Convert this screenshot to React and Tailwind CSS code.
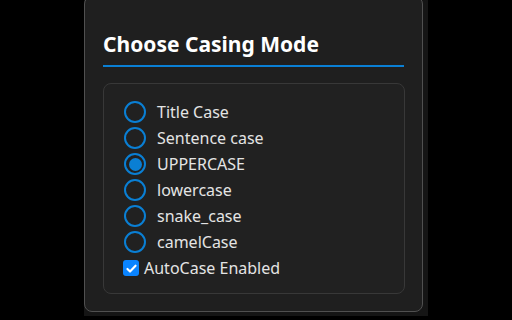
import React, { useState } from "react";

const modes = ["Title Case", "Sentence case", "UPPERCASE", "lowercase", "snake_case", "camelCase"];

const Radio = ({ checked }) => (
  <div className="w-[22px] h-[22px] rounded-full border-[2.5px] border-[#0a7fd4] flex items-center justify-center shrink-0">
    {checked && <div className="w-[13px] h-[13px] rounded-full bg-[#0a7fd4]" />}
  </div>
);

export default function App() {
  const [mode, setMode] = useState("UPPERCASE");
  const [auto, setAuto] = useState(true);

  return (
    <div className="w-[512px] h-[320px] bg-black overflow-hidden" style={{ fontFamily: '"Noto Sans", "Open Sans", sans-serif' }}>
      <div className="ml-[84px] w-[344px] h-[320px] bg-[#151515]">
        <div className="-mt-[4px] w-[339px] h-[316px] rounded-lg border border-[#505050] bg-[#1f1f1f] pl-[18px] pr-[18px] pt-[33px]">
          <h1 className="text-[21px] leading-[28px] font-bold text-white">Choose Casing Mode</h1>
          <div className="mt-[7px] h-[2px] w-[301px] bg-[#0a7fd4]" />
          <div className="mt-[16px] w-[302px] h-[211px] rounded-lg border border-[#383838] bg-[#212121] pl-[20px] pt-[15px]">
            <div className="flex flex-col">
              {modes.map((m) => (
                <button key={m} onClick={() => setMode(m)} className="flex items-center h-[26px] gap-[11px] text-left">
                  <Radio checked={mode === m} />
                  <span className="text-[16px] text-[#e4e4e4]">{m}</span>
                </button>
              ))}
              <button onClick={() => setAuto(!auto)} className="flex items-center h-[26px] gap-[5px] -ml-[1px]">
                <div className={`w-[16px] h-[16px] rounded-[3px] flex items-center justify-center ${auto ? "bg-[#0a84ff]" : "border border-[#888]"}`}>
                  {auto && (
                    <svg viewBox="0 0 16 16" className="w-[13px] h-[13px]" fill="none" stroke="white" strokeWidth="2.6" strokeLinecap="round" strokeLinejoin="round">
                      <path d="M3 8.5l3.2 3.2L13 4.5" />
                    </svg>
                  )}
                </div>
                <span className="text-[16px] text-[#e4e4e4]">AutoCase Enabled</span>
              </button>
            </div>
          </div>
        </div>
      </div>
    </div>
  );
}
